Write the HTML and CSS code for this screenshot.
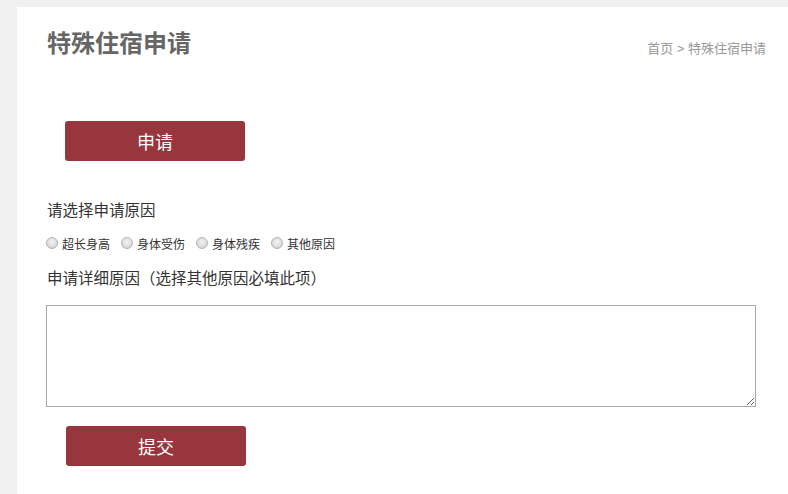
FILE: index.html
```html
<!DOCTYPE html>
<html lang="zh-CN">
<head>
    <meta charset="UTF-8">
    <meta name="viewport" content="width=device-width, initial-scale=1.0">
    <title>特殊住宿申请</title>
    <link rel="stylesheet" href="styles.css">
</head>
<body>
    <div class="panel">
        <div class="page-head">
            <h1>特殊住宿申请</h1>
            <div class="crumbs">首页 &gt; 特殊住宿申请</div>
        </div>

        <button type="button" class="btn btn-apply">申请</button>

        <form id="applyForm">
            <p class="field-label first">请选择申请原因</p>
            <div class="reasons">
                <label class="reason"><input type="radio" name="reason" value="1">超长身高</label>
                <label class="reason"><input type="radio" name="reason" value="2">身体受伤</label>
                <label class="reason"><input type="radio" name="reason" value="3">身体残疾</label>
                <label class="reason"><input type="radio" name="reason" value="4">其他原因</label>
            </div>

            <p class="field-label">申请详细原因（选择其他原因必填此项）</p>
            <textarea id="detail"></textarea>

            <button type="submit" class="btn btn-submit">提交</button>
        </form>
    </div>
</body>
</html>
```

FILE: styles.css
```css
* {
    box-sizing: border-box;
}

body {
    margin: 0;
    padding: 7px 0 0 17px;
    background: #f1f1f1;
    font-family: "Liberation Sans", "Noto Sans CJK SC", sans-serif;
    color: #333;
}

.panel {
    background: #fff;
    min-height: 487px;
    padding: 22px 22px 30px 29px;
}

.page-head {
    display: flex;
    justify-content: space-between;
    align-items: center;
    height: 30px;
}

h1 {
    margin: 0 0 0 1px;
    font-size: 24px;
    line-height: 30px;
    font-weight: bold;
    color: #666;
}

.crumbs {
    font-size: 13px;
    color: #999;
    padding-top: 6px;
}

.btn {
    display: block;
    width: 180px;
    height: 40px;
    border: none;
    border-radius: 3px;
    background: #98363d;
    color: #fff;
    font-family: inherit;
    font-size: 18px;
    cursor: pointer;
}

.btn-apply {
    margin: 62px 0 0 19px;
}

.btn-submit {
    margin: 19px 0 0 20px;
}

.field-label {
    margin: 16px 0 0 1px;
    font-size: 15.5px;
    line-height: 20px;
}

.field-label.first {
    margin-top: 40px;
}

.reasons {
    display: flex;
    align-items: center;
    height: 20px;
    margin-top: 12px;
}

.reason {
    display: flex;
    align-items: center;
    font-size: 12px;
    margin-right: 11px;
}

.reason input {
    appearance: none;
    -webkit-appearance: none;
    width: 12px;
    height: 12px;
    margin: 0 4px 0 0;
    border: 1px solid #b4b4b4;
    border-radius: 50%;
    background: radial-gradient(circle at 50% 40%, #f4f4f4 0%, #dcdcdc 60%, #c8c8c8 100%);
}

.reason input:checked {
    background: radial-gradient(circle, #555 0 2.5px, #e4e4e4 3px);
}

textarea {
    display: block;
    width: 710px;
    height: 102px;
    margin-top: 16px;
    border: 1px solid #a9a9a9;
    resize: both;
    font-family: inherit;
}
```
